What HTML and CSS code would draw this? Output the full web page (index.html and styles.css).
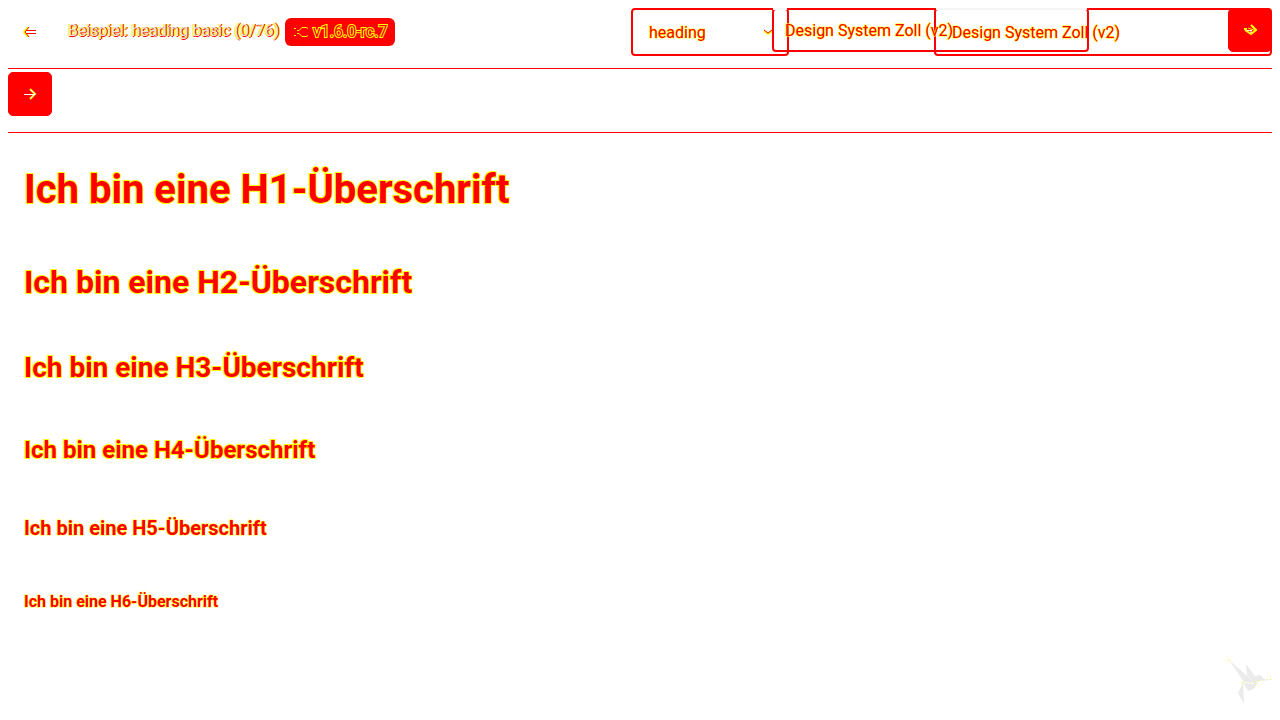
FILE: index.html
```html
<!DOCTYPE html>
<html lang="de">
<head>
<meta charset="utf-8">
<title>Beispiel: heading</title>
<link rel="stylesheet" href="styles.css">
</head>
<body>
<header class="toolbar">
  <a class="back" href="#" aria-label="Zurück"><svg width="14" height="14" viewBox="0 0 14 14" fill="none"><path class="halo" d="M5 2L1 7l4 5"/><path class="ink" d="M6 2L2 7l4 5M3 5.500h10M3 8.500h10"/></svg></a>
  <div class="title">Beispiel: heading basic (0/76)</div>
  <span class="badge"><svg width="16" height="16" viewBox="0 0 16 16" fill="none" stroke="#ff0"><path d="M1 4.500h2M4 6.500h2M4 9.500h2M1 11.500h2M6 6.500l3-3h4l2 1M6 9.500l3 3h4l2-1"/></svg>v1.6.0-rc.7</span>
  <div class="controls">
    <div class="field field-component"><select class="control" aria-label="Komponente"><option>heading</option></select><svg class="chevron" width="10" height="6" viewBox="0 0 10 6" fill="none"><path class="halo" d="M1 2l4 3 4-3"/><path class="ink" d="M1 1l4 3 4-3"/></svg></div>
    <div class="field field-theme"><select class="control" aria-label="Theme"><option>Design System Zoll (v2)</option></select></div>
    <div class="field-overlay"><select class="control control-small" aria-label="Theme Auswahl"><option>Design System Zoll (v2)</option></select></div>
    <button class="next next-top" aria-label="Weiter"><svg width="14" height="14" viewBox="0 0 14 14" fill="none"><path stroke="#ff0" stroke-width="2" d="M2 7l6 4 5-4-5-5M1 6h3"/><path stroke="#ff0" d="M5 5l6 2"/><path stroke="#fff" d="M4 7.500h5M7 9h2"/></svg></button>
  </div>
</header>
<nav class="second-row">
  <button class="next" aria-label="Nächstes Beispiel"><svg width="14" height="14" viewBox="0 0 14 14" fill="none"><path stroke="#ff0" stroke-width="2" d="M7 2l5 5-5 5"/><path stroke="#fff" stroke-width="1" d="M1 7.500h11M8 3l4 4-4 4"/></svg></button>
</nav>
<main class="content">
  <h1 class="h1">Ich bin eine H1-Überschrift</h1>
  <h2 class="h2">Ich bin eine H2-Überschrift</h2>
  <h3 class="h3">Ich bin eine H3-Überschrift</h3>
  <h4 class="h4">Ich bin eine H4-Überschrift</h4>
  <h5 class="h5">Ich bin eine H5-Überschrift</h5>
  <h6 class="h6">Ich bin eine H6-Überschrift</h6>
</main>
<svg class="bird" width="44" height="46" viewBox="0 0 44 46"><path fill="#ebebeb" d="M1 1l26 23-11-1zM18 5l9 12-1 6-7-7zM27 17l5-1 4 4 7 1-13 1-3 3-2-3zM15 24l12 1 3-2-4 7-6 2zM15 24l1 21-6-11z"/><path fill="#ff0" d="M0 1h1v1H0zM14 23h1v1h-1zM26 24h1v1h-1zM30 21h1v1h-1zM42 20h1v1h-1z"/></svg>
</body>
</html>
```
FILE: styles.css
```css
* { box-sizing: border-box; }
body {
  margin: 8px;
  background: #fff;
  color: #f00;
  font: 16px/24px Roboto, sans-serif;
}
.toolbar {
  display: flex;
  align-items: flex-start;
  border-bottom: 1px solid #f00;
  padding-bottom: 12px;
}
.back {
  display: flex;
  flex: none;
  align-items: center;
  justify-content: center;
  width: 44px;
  height: 48px;
}
.halo { stroke: #ff0; stroke-width: 2; }
.ink { stroke: #f00; }
.title {
  flex: none;
  width: 217px;
  margin: 11px 0 0 16px;
  white-space: nowrap;
  color: #e4e4e4;
  text-shadow: 1px 0 #f00, -1px 0 #ff0, 0 1px #f00, 2px 0 #ff0;
}
.badge {
  display: flex;
  flex: none;
  align-items: center;
  gap: 4px;
  height: 28px;
  margin-top: 10px;
  padding: 0 8px;
  border-radius: 6px;
  background: #f00;
  -webkit-text-stroke: 2px #ff0;
  paint-order: stroke fill;
}
.controls {
  position: relative;
  display: flex;
  justify-content: space-between;
  width: 641px;
  margin-left: auto;
}
.field { position: relative; }
.field-component { width: 158px; }
.field-theme { width: 338px; }
.control {
  display: block;
  appearance: none;
  width: 100%;
  height: 48px;
  padding: 2px 16px 0;
  border: 2px solid #f00;
  border-radius: 4px;
  background: transparent;
  color: #f00;
  font: inherit;
  -webkit-text-stroke: 1px #ff0;
  paint-order: stroke fill;
}
.chevron { position: absolute; right: 16px; top: 21px; }
.field-overlay {
  position: absolute;
  left: 141px;
  top: 0;
  width: 317px;
}
.control-small { height: 44px; padding: 2px 11px 0; }
.field-overlay::before,
.field-overlay::after {
  content: "";
  position: absolute;
  top: 0;
  height: 2px;
  background: #f5f5f5;
}
.field-overlay::before { left: 1px; width: 14px; }
.field-overlay::after { left: 164px; right: 2px; }
.next {
  display: flex;
  align-items: center;
  justify-content: center;
  width: 44px;
  height: 44px;
  padding: 0;
  border: 1px solid #f00;
  border-radius: 5px;
  background: #f00;
}
.next-top { position: absolute; right: 0; top: 0; }
.second-row {
  margin-top: 3px;
  padding-bottom: 16px;
  border-bottom: 1px solid #f00;
}
.content {
  display: flex;
  flex-direction: column;
  gap: 48px;
  padding: 33px 16px 16px;
}
.h1, .h2, .h3, .h4, .h5, .h6 {
  margin: 0;
  font-weight: 700;
  -webkit-text-stroke: 2px #ff0;
  paint-order: stroke fill;
}
.h1 { font-size: 40px; line-height: 48px; }
.h2 { font-size: 32px; line-height: 40px; }
.h3 { font-size: 28px; line-height: 36px; }
.h4 { font-size: 24px; line-height: 32px; }
.h5 { font-size: 20px; line-height: 28px; -webkit-text-stroke-width: 1px; }
.h6 { font-size: 16px; line-height: 24px; -webkit-text-stroke-width: 1px; }
.bird { position: fixed; right: 8px; bottom: 15px; }
```
